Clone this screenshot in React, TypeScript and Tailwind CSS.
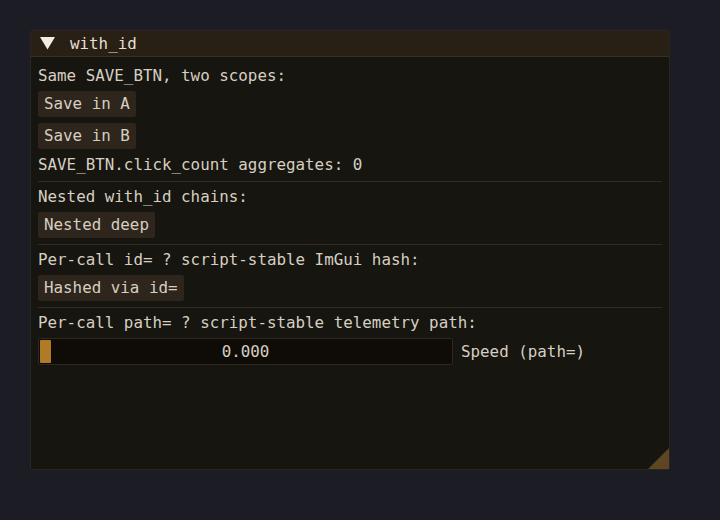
const mono = { fontFamily: '"DejaVu Sans Mono", "Liberation Mono", monospace' };

function Text({ children, className = "" }: { children: React.ReactNode; className?: string }) {
  return <div className={`h-[18px] leading-[18px] whitespace-pre text-[#d6cfc2] ${className}`}>{children}</div>;
}

function Button({ label }: { label: string }) {
  return (
    <div className="flex">
      <div className="h-[26px] px-[6px] flex items-center rounded-[2px] bg-[#2e261c] text-[#d6cfc2] whitespace-pre">
        {label}
      </div>
    </div>
  );
}

function Separator() {
  return <div className="h-px bg-[#332b21]" />;
}

export default function App() {
  return (
    <div className="w-[720px] h-[520px] bg-[#1c1c24] pt-[30px] pl-[30px]" style={mono}>
      <div className="relative w-[640px] h-[440px] bg-[#16150f] border border-[#2a261f] rounded-[2px] flex flex-col text-[15.85px]">
        <div className="h-[26px] bg-[#281f15] border-b border-[#3a2f22] flex items-center shrink-0">
          <svg width="15" height="13" viewBox="0 0 15 13" className="ml-[9px]">
            <polygon points="0,0 15,0 7.5,12.5" fill="#f2ede4" />
          </svg>
          <span className="ml-[15px] text-[#e6dfd2] leading-[22px] whitespace-pre">with_id</span>
        </div>
        <div className="flex flex-col gap-[6px] pt-[10px] px-[7px]">
          <Text>Same SAVE_BTN, two scopes:</Text>
          <Button label="Save in A" />
          <Button label="Save in B" />
          <Text className="mt-px mb-px">SAVE_BTN.click_count aggregates: 0</Text>
          <Separator />
          <Text>Nested with_id chains:</Text>
          <Button label="Nested deep" />
          <Separator />
          <Text>Per-call id= ? script-stable ImGui hash:</Text>
          <Button label="Hashed via id=" />
          <Separator />
          <Text>Per-call path= ? script-stable telemetry path:</Text>
          <div className="flex items-center gap-[8px]">
            <div className="relative w-[415px] h-[27px] bg-[#0f0c08] border border-[#2e271d] rounded-[2px] flex items-center justify-center text-[#d6cfc2]">
              <div className="absolute left-[1px] top-[1px] w-[11px] h-[23px] bg-[#b07a26] rounded-[1px]" />
              <span className="leading-[22px]">0.000</span>
            </div>
            <span className="text-[#d6cfc2] whitespace-pre leading-[22px]">Speed (path=)</span>
          </div>
        </div>
        <svg width="21" height="21" viewBox="0 0 21 21" className="absolute right-0 bottom-0">
          <polygon points="21,0 21,21 0,21" fill="#5e4523" />
        </svg>
      </div>
    </div>
  );
}
